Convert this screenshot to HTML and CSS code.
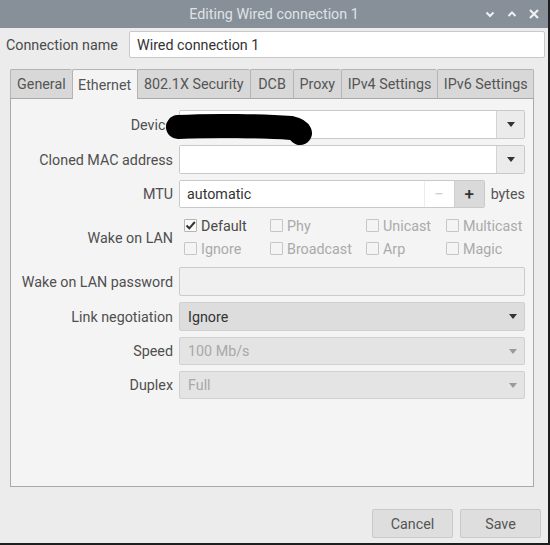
FILE: index.html
```html
<!DOCTYPE html>
<html>
<head>
<meta charset="utf-8">
<link rel="stylesheet" href="styles.css">
</head>
<body>
<div class="window">
  <div class="titlebar">
    <div class="title">Editing Wired connection 1</div>
    <div class="wm-buttons">
      <svg width="10" height="8" viewBox="0 0 10 8"><path d="M1.5 2.5 L5 6 L8.5 2.5" fill="none" stroke="#eef0f2" stroke-width="2"/></svg>
      <svg width="10" height="8" viewBox="0 0 10 8"><path d="M1.5 6 L5 2.5 L8.5 6" fill="none" stroke="#eef0f2" stroke-width="2"/></svg>
      <svg width="10" height="10" viewBox="0 0 10 10"><path d="M1 1 L9 9 M9 1 L1 9" fill="none" stroke="#eef0f2" stroke-width="2.2"/></svg>
    </div>
  </div>
  <div class="content">
    <div class="name-row">
      <span class="name-label">Connection name</span>
      <div class="entry name-entry">Wired connection 1</div>
    </div>
    <div class="notebook">
      <div class="tabs">
        <div class="tab w-general">General</div>
        <div class="tab active w-ethernet">Ethernet</div>
        <div class="tab w-sec">802.1X Security</div>
        <div class="tab w-dcb">DCB</div>
        <div class="tab w-proxy">Proxy</div>
        <div class="tab w-ipv4">IPv4 Settings</div>
        <div class="tab w-ipv6">IPv6 Settings</div>
      </div>
      <div class="panel">
        <div class="form">
          <div class="label">Device</div>
          <div class="combo-entry">
            <div class="ce-text"></div>
            <div class="ce-btn"><span class="arrow"></span></div>
          </div>

          <div class="label">Cloned MAC address</div>
          <div class="combo-entry">
            <div class="ce-text"></div>
            <div class="ce-btn"><span class="arrow"></span></div>
          </div>

          <div class="label">MTU</div>
          <div class="mtu">
            <div class="spin">
              <div class="spin-text">automatic</div>
              <div class="spin-minus">−</div>
              <div class="spin-plus">+</div>
            </div>
            <span class="unit">bytes</span>
          </div>

          <div class="label">Wake on LAN</div>
          <div class="checks">
            <div class="check"><span class="box checked"><svg width="11" height="11" viewBox="0 0 11 11"><path d="M1.5 5.5 L4.3 8.3 L9.8 2" fill="none" stroke="#333" stroke-width="2"/></svg></span><span class="ctext">Default</span></div>
            <div class="check dis"><span class="box"></span><span class="ctext">Phy</span></div>
            <div class="check dis"><span class="box"></span><span class="ctext">Unicast</span></div>
            <div class="check dis"><span class="box"></span><span class="ctext">Multicast</span></div>
            <div class="check dis"><span class="box"></span><span class="ctext">Ignore</span></div>
            <div class="check dis"><span class="box"></span><span class="ctext">Broadcast</span></div>
            <div class="check dis"><span class="box"></span><span class="ctext">Arp</span></div>
            <div class="check dis"><span class="box"></span><span class="ctext">Magic</span></div>
          </div>

          <div class="label">Wake on LAN password</div>
          <div class="entry dis-entry"></div>

          <div class="label">Link negotiation</div>
          <div class="combo link"><span class="ctext-main">Ignore</span><span class="arrow"></span></div>

          <div class="label">Speed</div>
          <div class="combo disabled"><span class="ctext-main">100 Mb/s</span><span class="arrow"></span></div>

          <div class="label">Duplex</div>
          <div class="combo disabled"><span class="ctext-main">Full</span><span class="arrow"></span></div>
        </div>
      </div>
    </div>
    <div class="actions">
      <div class="btn">Cancel</div>
      <div class="btn">Save</div>
    </div>
  </div>
  <svg class="redact" width="155" height="40" viewBox="0 0 155 40"><path d="M13 17 C 48 15, 98 16, 126 18 C 131 19, 134 21, 135 23" fill="none" stroke="#000" stroke-width="24" stroke-linecap="round"/></svg>
</div>
</body>
</html>
```

FILE: styles.css
```css
* { box-sizing: border-box; }
html, body { margin: 0; padding: 0; background: #ececec; }
body {
  font-family: Roboto, "Noto Sans", sans-serif;
  font-size: 14.3px;
  color: #4a4a4a;
}
.window {
  position: relative;
  width: 550px;
  height: 545px;
  background: #ececec;
  border-right: 2px solid #1e1e1e;
  border-bottom: 2px solid #1e1e1e;
  display: flex;
  flex-direction: column;
}
.titlebar {
  height: 28px;
  background: #878f99;
  display: flex;
  align-items: center;
  justify-content: center;
  position: relative;
  flex: none;
}
.title {
  color: #dfe3e7;
  font-size: 14.3px;
}
.wm-buttons {
  position: absolute;
  right: 9px;
  top: 9px;
  display: flex;
  gap: 12px;
  align-items: center;
}
.content {
  flex: 1;
  display: flex;
  flex-direction: column;
  padding: 3px 3px 0 0;
}
.name-row {
  display: flex;
  align-items: center;
  height: 27px;
}
.name-label {
  width: 129px;
  padding-left: 6px;
  color: #4a4a4a;
}
.entry {
  background: #fff;
  border: 1px solid #c9c9c9;
  border-radius: 2px;
  height: 100%;
  display: flex;
  align-items: center;
  padding-left: 7px;
  color: #333;
}
.name-entry { flex: 1; }

.notebook {
  margin: 11px 11px 0 10px;
}
.tabs {
  display: flex;
  height: 29px;
  position: relative;
  z-index: 1;
}
.tab {
  height: 29px;
  background: #d8d8d8;
  border: 1px solid #b4b4b4;
  border-right: none;
  border-bottom: none;
  display: flex;
  align-items: center;
  justify-content: center;
  color: #555;
  border-radius: 2px 2px 0 0;
}
.tab.w-ipv6 { border-right: 1px solid #b4b4b4; }
.tab.active {
  background: #f4f4f4;
  height: 30px;
}
.w-general { width: 62px; }
.w-ethernet { width: 65px; }
.w-sec { width: 114px; }
.w-dcb { width: 43px; }
.w-proxy { width: 48px; }
.w-ipv4 { width: 97px; }
.w-ipv6 { width: 97px; }

.panel {
  background: #f4f4f4;
  border: 1px solid #a9a9a9;
  height: 389px;
  padding: 11px 11px 0 0;
}
.form {
  display: grid;
  grid-template-columns: 162px 346px;
  column-gap: 6px;
  grid-template-rows: 29px 29px 28px 47px 29px 29px 28px 28px;
  row-gap: 6px;
}
.label {
  text-align: right;
  display: flex;
  align-items: center;
  justify-content: flex-end;
  color: #4f4f4f;
}
.combo-entry {
  display: flex;
  border: 1px solid #c9c9c9;
  border-radius: 2px;
}
.ce-text {
  flex: 1;
  background: #fff;
  border-right: 1px solid #d4d4d4;
}
.ce-btn {
  width: 27px;
  background: #ebebeb;
  display: flex;
  align-items: center;
  justify-content: center;
}
.arrow {
  width: 0;
  height: 0;
  border-left: 4.5px solid transparent;
  border-right: 4.5px solid transparent;
  border-top: 5px solid #333;
}
.mtu {
  display: flex;
  align-items: center;
  gap: 6px;
  height: 28px;
}
.spin {
  display: flex;
  width: 306px;
  height: 28px;
  border: 1px solid #c9c9c9;
  border-radius: 2px;
}
.spin-text {
  flex: 1;
  background: #fff;
  display: flex;
  align-items: center;
  padding-left: 7px;
  color: #333;
}
.spin-minus, .spin-plus {
  width: 30px;
  display: flex;
  align-items: center;
  justify-content: center;
  font-size: 17px;
}
.spin-minus {
  background: #fff;
  color: #cfcfcf;
  border-left: 1px solid #ececec;
}
.spin-plus {
  background: #dadada;
  color: #333;
  border-left: 1px solid #cfcfcf;
  font-weight: 500;
}
.unit { color: #555; }

.checks {
  display: grid;
  grid-template-columns: 86px 96px 80px 1fr;
  grid-template-rows: 23px 23px;
  padding-left: 5px;
  padding-top: 0;
}
.check {
  display: flex;
  align-items: center;
  gap: 4px;
  color: #4a4a4a;
}
.check.dis { color: #aaaaaa; }
.box {
  width: 13px;
  height: 13px;
  border: 1px solid #c6c6c6;
  border-radius: 1px;
  background: #f4f4f4;
  display: flex;
  align-items: center;
  justify-content: center;
  flex: none;
}
.box.checked {
  border-color: #b5b5b5;
  background: #fafafa;
}
.dis-entry {
  background: #f0f0f0;
  border-color: #cbcbcb;
}
.combo {
  display: flex;
  align-items: center;
  justify-content: space-between;
  padding: 0 7px 0 8px;
  border: 1px solid #d0d0d0;
  border-radius: 2px;
}
.combo.link {
  background: #dddddd;
  color: #333;
}
.combo.disabled {
  background: #e4e4e4;
  color: #a8a8a8;
}
.combo.disabled .arrow { border-top-color: #9a9a9a; }

.actions {
  display: flex;
  justify-content: flex-end;
  gap: 7px;
  padding: 22px 4px 0 0;
}
.btn {
  width: 81px;
  height: 29px;
  background: #dedede;
  border: 1px solid #c9c9c9;
  border-radius: 2px;
  display: flex;
  align-items: center;
  justify-content: center;
  color: #555;
}
.redact {
  position: absolute;
  left: 165px;
  top: 110px;
}
```
